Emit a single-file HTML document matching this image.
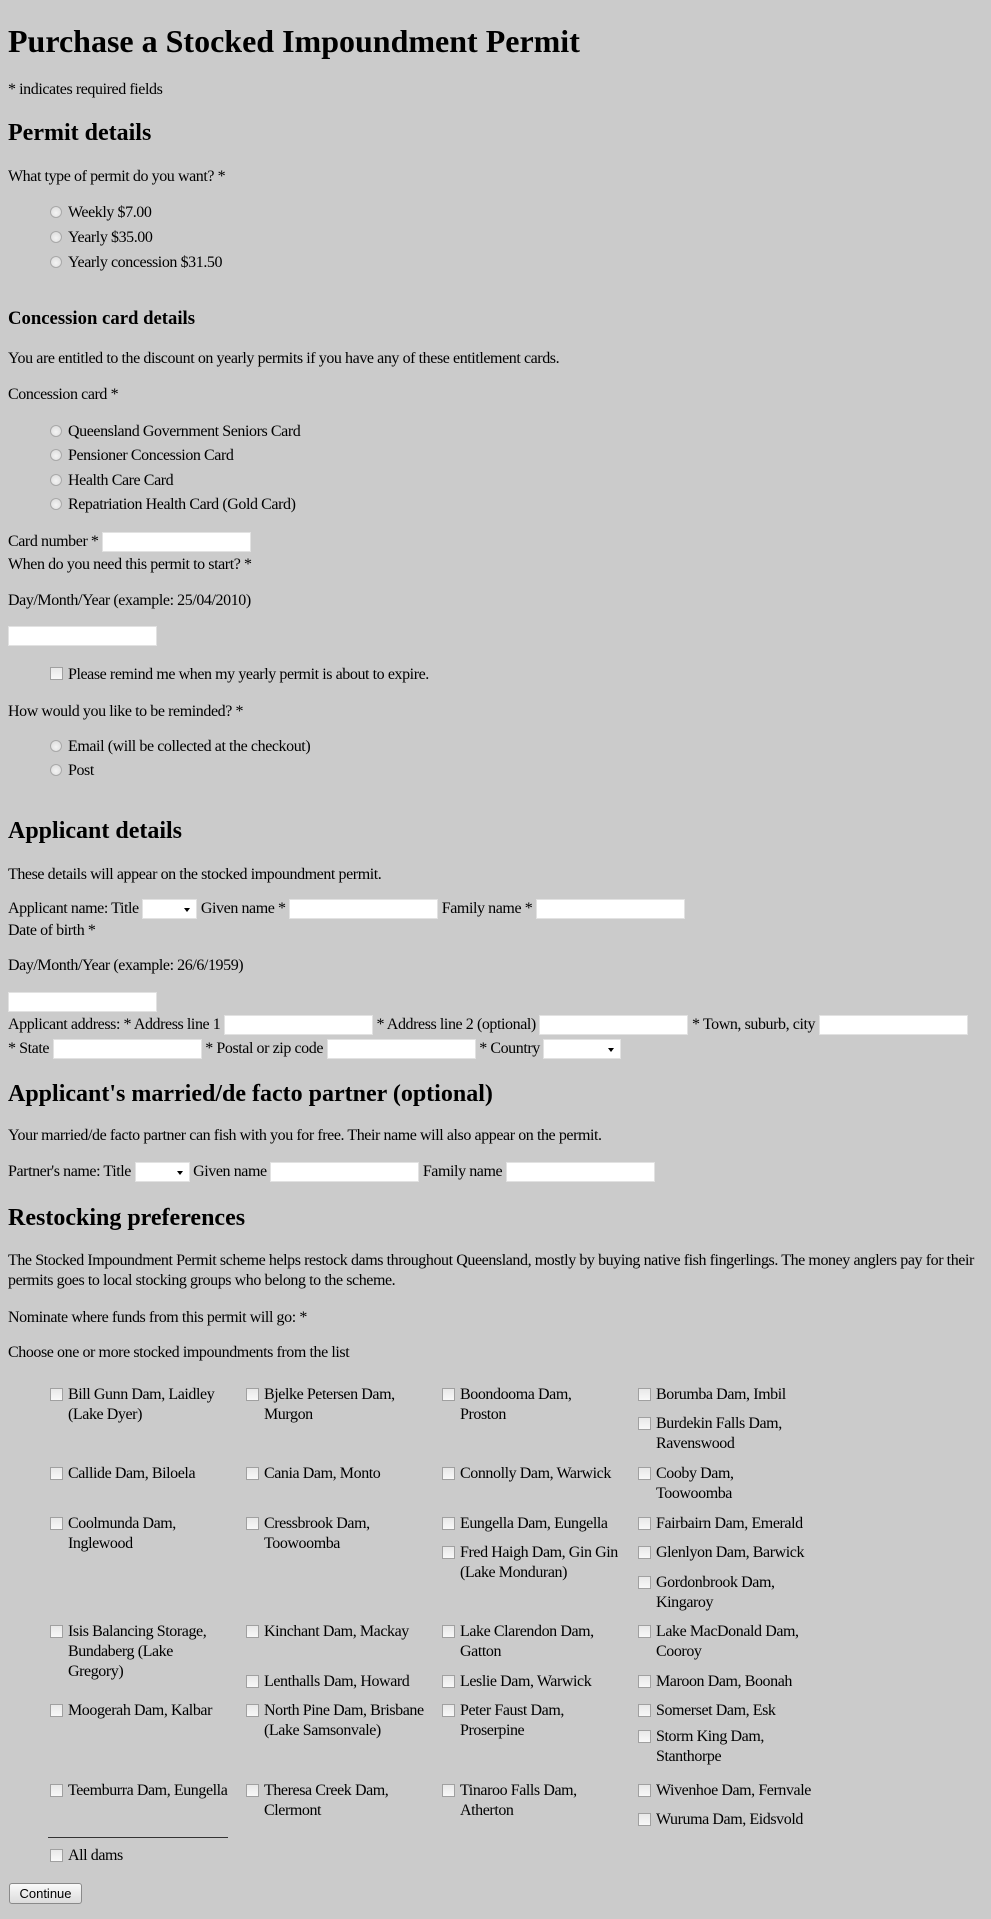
<!DOCTYPE html>
<html><head><meta charset="utf-8">
<style>
html,body{margin:0;padding:0;background:#cbcbcb;}
body{width:991px;height:1919px;position:relative;overflow:hidden;font-family:"Liberation Serif",serif;font-size:16px;color:#000;}
.t{position:absolute;left:8px;line-height:20px;white-space:nowrap;letter-spacing:-0.42px;padding-top:1px;}
.h1{font-size:32px;font-weight:bold;line-height:40px;letter-spacing:0;}
.h2{font-size:24px;font-weight:bold;line-height:30px;letter-spacing:0;}
.h3{font-size:18.72px;font-weight:bold;line-height:24px;letter-spacing:0;}
.r{position:absolute;left:50px;line-height:20px;white-space:nowrap;letter-spacing:-0.42px;padding-top:1px;}
.rd{display:inline-block;width:10px;height:10px;border-radius:50%;border:1px solid #a8a8a8;background:radial-gradient(circle at 50% 60%,#f4f4f4,#d8d8d8);vertical-align:-1px;margin-right:6px;box-sizing:content-box;}
.cb{display:inline-block;width:11px;height:11px;border:1px solid #a0a0a0;background:linear-gradient(#e8e8e8,#f8f8f8);vertical-align:-1px;margin-right:5px;}
.in{display:inline-block;width:147px;height:18px;background:#fff;border:1px solid #e2e2e2;vertical-align:middle;}
.sel{display:inline-block;height:18px;background:#fff;border:1px solid #e2e2e2;vertical-align:middle;position:relative;}
.sel:after{content:"";position:absolute;right:6px;top:8px;border-left:3px solid transparent;border-right:3px solid transparent;border-top:4px solid #000;}
.d{position:absolute;line-height:20px;width:180px;letter-spacing:-0.42px;padding-top:1px;}
.d .cb{position:absolute;left:0;top:4px;}
.d span.x{display:block;margin-left:18px;white-space:nowrap;}
</style></head><body>
<div class="t h1" style="top:20px">Purchase a Stocked Impoundment Permit</div>
<div class="t" style="top:79px">* indicates required fields</div>
<div class="t h2" style="top:117px">Permit details</div>
<div class="t" style="top:166px">What type of permit do you want? *</div>
<div class="r" style="top:202px"><span class="rd"></span>Weekly $7.00</div>
<div class="r" style="top:227px"><span class="rd"></span>Yearly $35.00</div>
<div class="r" style="top:252px"><span class="rd"></span>Yearly concession $31.50</div>

<div class="t h3" style="top:306px">Concession card details</div>
<div class="t" style="top:348px">You are entitled to the discount on yearly permits if you have any of these entitlement cards.</div>
<div class="t" style="top:384px">Concession card *</div>
<div class="r" style="top:421px"><span class="rd"></span>Queensland Government Seniors Card</div>
<div class="r" style="top:445px"><span class="rd"></span>Pensioner Concession Card</div>
<div class="r" style="top:470px"><span class="rd"></span>Health Care Card</div>
<div class="r" style="top:494px"><span class="rd"></span>Repatriation Health Card (Gold Card)</div>

<div class="t" style="top:531px">Card number * <span class="in"></span></div>
<div class="t" style="top:554px">When do you need this permit to start? *</div>
<div class="t" style="top:590px">Day/Month/Year (example: 25/04/2010)</div>
<div class="t" style="top:625px"><span class="in"></span></div>
<div class="r" style="top:664px"><span class="cb"></span>Please remind me when my yearly permit is about to expire.</div>
<div class="t" style="top:701px">How would you like to be reminded? *</div>
<div class="r" style="top:736px"><span class="rd"></span>Email (will be collected at the checkout)</div>
<div class="r" style="top:760px"><span class="rd"></span>Post</div>

<div class="t h2" style="top:815px">Applicant details</div>
<div class="t" style="top:864px">These details will appear on the stocked impoundment permit.</div>
<div class="t" style="top:898px">Applicant name: Title <span class="sel" style="width:53px"></span> Given name * <span class="in"></span> Family name * <span class="in"></span></div>
<div class="t" style="top:920px">Date of birth *</div>
<div class="t" style="top:955px">Day/Month/Year (example: 26/6/1959)</div>
<div class="t" style="top:991px"><span class="in"></span></div>
<div class="t" style="top:1014px">Applicant address: * Address line 1 <span class="in"></span> * Address line 2 (optional) <span class="in"></span> * Town, suburb, city <span class="in"></span></div>
<div class="t" style="top:1038px">* State <span class="in"></span> * Postal or zip code <span class="in"></span> * Country <span class="sel" style="width:76px"></span></div>

<div class="t h2" style="top:1078px">Applicant's married/de facto partner (optional)</div>
<div class="t" style="top:1125px">Your married/de facto partner can fish with you for free. Their name will also appear on the permit.</div>
<div class="t" style="top:1161px">Partner's name: Title <span class="sel" style="width:53px"></span> Given name <span class="in"></span> Family name <span class="in"></span></div>

<div class="t h2" style="top:1202px">Restocking preferences</div>
<div class="t" style="top:1250px">The Stocked Impoundment Permit scheme helps restock dams throughout Queensland, mostly by buying native fish fingerlings. The money anglers pay for their<br>permits goes to local stocking groups who belong to the scheme.</div>
<div class="t" style="top:1307px">Nominate where funds from this permit will go: *</div>
<div class="t" style="top:1342px">Choose one or more stocked impoundments from the list</div>

<div class="d" style="left:50px;top:1384px"><span class="cb"></span><span class="x">Bill Gunn Dam, Laidley<br>(Lake Dyer)</span></div>
<div class="d" style="left:50px;top:1463px"><span class="cb"></span><span class="x">Callide Dam, Biloela</span></div>
<div class="d" style="left:50px;top:1513px"><span class="cb"></span><span class="x">Coolmunda Dam,<br>Inglewood</span></div>
<div class="d" style="left:50px;top:1621px"><span class="cb"></span><span class="x">Isis Balancing Storage,<br>Bundaberg (Lake<br>Gregory)</span></div>
<div class="d" style="left:50px;top:1700px"><span class="cb"></span><span class="x">Moogerah Dam, Kalbar</span></div>
<div class="d" style="left:50px;top:1780px"><span class="cb"></span><span class="x">Teemburra Dam, Eungella</span></div>

<div class="d" style="left:246px;top:1384px"><span class="cb"></span><span class="x">Bjelke Petersen Dam,<br>Murgon</span></div>
<div class="d" style="left:246px;top:1463px"><span class="cb"></span><span class="x">Cania Dam, Monto</span></div>
<div class="d" style="left:246px;top:1513px"><span class="cb"></span><span class="x">Cressbrook Dam,<br>Toowoomba</span></div>
<div class="d" style="left:246px;top:1621px"><span class="cb"></span><span class="x">Kinchant Dam, Mackay</span></div>
<div class="d" style="left:246px;top:1671px"><span class="cb"></span><span class="x">Lenthalls Dam, Howard</span></div>
<div class="d" style="left:246px;top:1700px"><span class="cb"></span><span class="x">North Pine Dam, Brisbane<br>(Lake Samsonvale)</span></div>
<div class="d" style="left:246px;top:1780px"><span class="cb"></span><span class="x">Theresa Creek Dam,<br>Clermont</span></div>

<div class="d" style="left:442px;top:1384px"><span class="cb"></span><span class="x">Boondooma Dam,<br>Proston</span></div>
<div class="d" style="left:442px;top:1463px"><span class="cb"></span><span class="x">Connolly Dam, Warwick</span></div>
<div class="d" style="left:442px;top:1513px"><span class="cb"></span><span class="x">Eungella Dam, Eungella</span></div>
<div class="d" style="left:442px;top:1542px"><span class="cb"></span><span class="x">Fred Haigh Dam, Gin Gin<br>(Lake Monduran)</span></div>
<div class="d" style="left:442px;top:1621px"><span class="cb"></span><span class="x">Lake Clarendon Dam,<br>Gatton</span></div>
<div class="d" style="left:442px;top:1671px"><span class="cb"></span><span class="x">Leslie Dam, Warwick</span></div>
<div class="d" style="left:442px;top:1700px"><span class="cb"></span><span class="x">Peter Faust Dam,<br>Proserpine</span></div>
<div class="d" style="left:442px;top:1780px"><span class="cb"></span><span class="x">Tinaroo Falls Dam,<br>Atherton</span></div>

<div class="d" style="left:638px;top:1384px"><span class="cb"></span><span class="x">Borumba Dam, Imbil</span></div>
<div class="d" style="left:638px;top:1413px"><span class="cb"></span><span class="x">Burdekin Falls Dam,<br>Ravenswood</span></div>
<div class="d" style="left:638px;top:1463px"><span class="cb"></span><span class="x">Cooby Dam,<br>Toowoomba</span></div>
<div class="d" style="left:638px;top:1513px"><span class="cb"></span><span class="x">Fairbairn Dam, Emerald</span></div>
<div class="d" style="left:638px;top:1542px"><span class="cb"></span><span class="x">Glenlyon Dam, Barwick</span></div>
<div class="d" style="left:638px;top:1572px"><span class="cb"></span><span class="x">Gordonbrook Dam,<br>Kingaroy</span></div>
<div class="d" style="left:638px;top:1621px"><span class="cb"></span><span class="x">Lake MacDonald Dam,<br>Cooroy</span></div>
<div class="d" style="left:638px;top:1671px"><span class="cb"></span><span class="x">Maroon Dam, Boonah</span></div>
<div class="d" style="left:638px;top:1700px"><span class="cb"></span><span class="x">Somerset Dam, Esk</span></div>
<div class="d" style="left:638px;top:1726px"><span class="cb"></span><span class="x">Storm King Dam,<br>Stanthorpe</span></div>
<div class="d" style="left:638px;top:1780px"><span class="cb"></span><span class="x">Wivenhoe Dam, Fernvale</span></div>
<div class="d" style="left:638px;top:1809px"><span class="cb"></span><span class="x">Wuruma Dam, Eidsvold</span></div>

<div style="position:absolute;left:48px;top:1837px;width:180px;height:1px;background:#333;"></div>
<div class="d" style="left:50px;top:1845px"><span class="cb"></span><span class="x">All dams</span></div>

<div style="position:absolute;left:9px;top:1883px;width:71px;height:19px;border:1px solid #8a8a8a;border-radius:3px;background:linear-gradient(#fafafa,#dcdcdc);font-family:'Liberation Sans',sans-serif;font-size:13px;line-height:19px;text-align:center;">Continue</div>
</body></html>
